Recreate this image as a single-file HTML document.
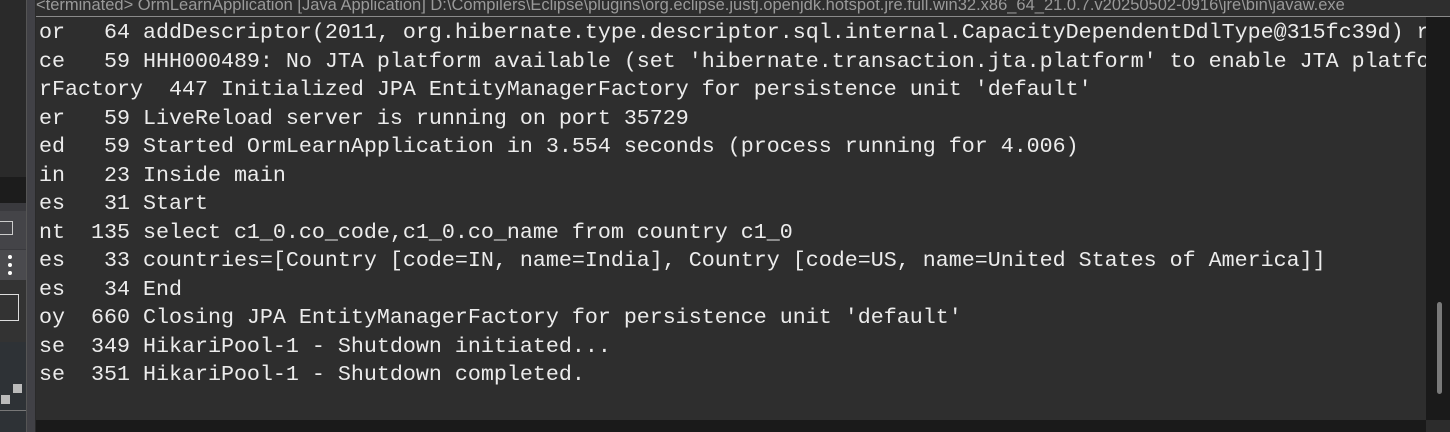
<!DOCTYPE html>
<html><head><meta charset="utf-8"><style>
html,body{margin:0;padding:0;width:1450px;height:432px;overflow:hidden;background:#2e2e2e;position:relative}
.a{position:absolute}
#hdr{left:36px;top:-4px;font:16.5px "Liberation Sans",sans-serif;color:#9a9a9a;white-space:nowrap;height:20px;width:1414px;overflow:hidden}
#con{left:36px;top:17px;width:1390px;height:403px;overflow:hidden;background:#2e2e2e}
pre{margin:0;padding:2px 0 0 3px;font:21.67px/28.5px "Liberation Mono","DejaVu Sans Mono",monospace;color:#ececec}
</style></head><body>
<div class="a" style="left:0;top:0;width:26px;height:177px;background:#2a2a2a"></div>
<div class="a" style="left:0;top:177px;width:26px;height:26px;background:#1c1c1c"></div>
<div class="a" style="left:0;top:203px;width:26px;height:229px;background:#3a3a3e"></div>
<div class="a" style="left:0;top:211px;width:26px;height:38px;background:#444448"></div>
<div class="a" style="left:0;top:221px;width:12px;height:12px;border:1px solid #ccc;border-left:none"></div>
<div class="a" style="left:0;top:250px;width:26px;height:30px;background:#4a4a4e"></div>
<div class="a" style="left:8px;top:255px;width:4px;height:4px;border-radius:50%;background:#fff;box-shadow:0 8px 0 #fff,0 16px 0 #fff"></div>
<div class="a" style="left:0;top:280px;width:26px;height:62px;background:#333"></div>
<div class="a" style="left:0;top:294px;width:18px;height:25px;border:1px solid #ddd;border-left:none"></div>
<div class="a" style="left:0;top:342px;width:26px;height:90px;background:#2e3236"></div>
<div class="a" style="left:0;top:410px;width:26px;height:1px;background:#777"></div>
<div class="a" style="left:13px;top:384px;width:9px;height:9px;background:#bbb"></div>
<div class="a" style="left:1px;top:395px;width:9px;height:9px;background:#bbb"></div>
<div class="a" style="left:26px;top:0;width:9px;height:432px;background:#414146;border-left:1px solid #555"></div>
<div class="a" style="left:35px;top:0;width:1px;height:432px;background:#2a2a2a"></div>
<div id="hdr" class="a">&lt;terminated&gt; OrmLearnApplication [Java Application] D:\Compilers\Eclipse\plugins\org.eclipse.justj.openjdk.hotspot.jre.full.win32.x86_64_21.0.7.v20250502-0916\jre\bin\javaw.exe</div>
<div class="a" style="left:36px;top:16px;width:1414px;height:1px;background:#8a8a8a"></div>
<div id="con" class="a"><pre>or   64 addDescriptor(2011, org.hibernate.type.descriptor.sql.internal.CapacityDependentDdlType@315fc39d) r
ce   59 HHH000489: No JTA platform available (set 'hibernate.transaction.jta.platform' to enable JTA platfo
rFactory  447 Initialized JPA EntityManagerFactory for persistence unit 'default'
er   59 LiveReload server is running on port 35729
ed   59 Started OrmLearnApplication in 3.554 seconds (process running for 4.006)
in   23 Inside main
es   31 Start
nt  135 select c1_0.co_code,c1_0.co_name from country c1_0
es   33 countries=[Country [code=IN, name=India], Country [code=US, name=United States of America]]
es   34 End
oy  660 Closing JPA EntityManagerFactory for persistence unit 'default'
se  349 HikariPool-1 - Shutdown initiated...
se  351 HikariPool-1 - Shutdown completed.</pre></div>
<div class="a" style="left:1426px;top:17px;width:24px;height:403px;background:#1a1a1a"></div>
<div class="a" style="left:1437px;top:302px;width:5px;height:92px;border-radius:3px;background:#7a7a7a"></div>
<div class="a" style="left:36px;top:420px;width:1390px;height:12px;background:#1a1a1a"></div>
<div class="a" style="left:1426px;top:420px;width:24px;height:12px;background:#2c2c2c"></div>
</body></html>
